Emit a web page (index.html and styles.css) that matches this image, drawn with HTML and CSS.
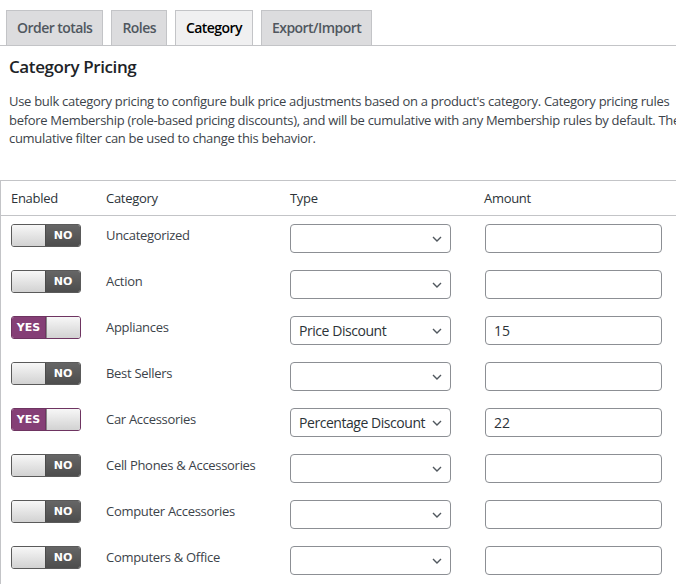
FILE: index.html
```html
<!DOCTYPE html>
<html lang="en">
<head>
<meta charset="utf-8">
<title>Category Pricing</title>
<link rel="stylesheet" href="styles.css">
</head>
<body>
<div class="page">
  <nav class="tabs">
    <a class="tab">Order totals</a>
    <a class="tab">Roles</a>
    <a class="tab tab-active">Category</a>
    <a class="tab">Export/Import</a>
  </nav>
  <section class="content">
    <h2 class="title">Category Pricing</h2>
    <p class="desc">Use bulk category pricing to configure bulk price adjustments based on a product's category. Category pricing rules<br>before Membership (role-based pricing discounts), and will be cumulative with any Membership rules by default. The<br>cumulative filter can be used to change this behavior.</p>
    <table class="pricing">
      <thead>
        <tr><th class="c-en">Enabled</th><th class="c-cat">Category</th><th class="c-type">Type</th><th class="c-amt">Amount</th></tr>
      </thead>
      <tbody>
        <tr>
          <td><span class="toggle off"><span class="knob"></span><span class="state">NO</span></span></td>
          <td class="label">Uncategorized</td>
          <td><div class="select"><span class="sel-text"></span><svg class="chev" width="10" height="6" viewBox="0 0 10 6"><path d="M1 1l4 4 4-4" fill="none" stroke="#50575e" stroke-width="1.4"/></svg></div></td>
          <td><div class="input"></div></td>
        </tr>
        <tr>
          <td><span class="toggle off"><span class="knob"></span><span class="state">NO</span></span></td>
          <td class="label">Action</td>
          <td><div class="select"><span class="sel-text"></span><svg class="chev" width="10" height="6" viewBox="0 0 10 6"><path d="M1 1l4 4 4-4" fill="none" stroke="#50575e" stroke-width="1.4"/></svg></div></td>
          <td><div class="input"></div></td>
        </tr>
        <tr>
          <td><span class="toggle on"><span class="state">YES</span><span class="knob"></span></span></td>
          <td class="label">Appliances</td>
          <td><div class="select"><span class="sel-text">Price Discount</span><svg class="chev" width="10" height="6" viewBox="0 0 10 6"><path d="M1 1l4 4 4-4" fill="none" stroke="#50575e" stroke-width="1.4"/></svg></div></td>
          <td><div class="input">15</div></td>
        </tr>
        <tr>
          <td><span class="toggle off"><span class="knob"></span><span class="state">NO</span></span></td>
          <td class="label">Best Sellers</td>
          <td><div class="select"><span class="sel-text"></span><svg class="chev" width="10" height="6" viewBox="0 0 10 6"><path d="M1 1l4 4 4-4" fill="none" stroke="#50575e" stroke-width="1.4"/></svg></div></td>
          <td><div class="input"></div></td>
        </tr>
        <tr>
          <td><span class="toggle on"><span class="state">YES</span><span class="knob"></span></span></td>
          <td class="label">Car Accessories</td>
          <td><div class="select"><span class="sel-text">Percentage Discount</span><svg class="chev" width="10" height="6" viewBox="0 0 10 6"><path d="M1 1l4 4 4-4" fill="none" stroke="#50575e" stroke-width="1.4"/></svg></div></td>
          <td><div class="input">22</div></td>
        </tr>
        <tr>
          <td><span class="toggle off"><span class="knob"></span><span class="state">NO</span></span></td>
          <td class="label">Cell Phones &amp; Accessories</td>
          <td><div class="select"><span class="sel-text"></span><svg class="chev" width="10" height="6" viewBox="0 0 10 6"><path d="M1 1l4 4 4-4" fill="none" stroke="#50575e" stroke-width="1.4"/></svg></div></td>
          <td><div class="input"></div></td>
        </tr>
        <tr>
          <td><span class="toggle off"><span class="knob"></span><span class="state">NO</span></span></td>
          <td class="label">Computer Accessories</td>
          <td><div class="select"><span class="sel-text"></span><svg class="chev" width="10" height="6" viewBox="0 0 10 6"><path d="M1 1l4 4 4-4" fill="none" stroke="#50575e" stroke-width="1.4"/></svg></div></td>
          <td><div class="input"></div></td>
        </tr>
        <tr>
          <td><span class="toggle off"><span class="knob"></span><span class="state">NO</span></span></td>
          <td class="label">Computers &amp; Office</td>
          <td><div class="select"><span class="sel-text"></span><svg class="chev" width="10" height="6" viewBox="0 0 10 6"><path d="M1 1l4 4 4-4" fill="none" stroke="#50575e" stroke-width="1.4"/></svg></div></td>
          <td><div class="input"></div></td>
        </tr>
      </tbody>
    </table>
  </section>
</div>
</body>
</html>
```

FILE: styles.css
```css
html, body {
  margin: 0;
  padding: 0;
  background: #fff;
  overflow: hidden;
}
body {
  font-family: "Open Sans", "Noto Sans", sans-serif;
  color: #3c434a;
  font-size: 13px;
}
.page {
  width: 760px;
  padding-top: 10px;
}
.tabs {
  display: flex;
  gap: 8px;
  padding-left: 6px;
  border-bottom: 1px solid #c3c4c7;
}
.tab {
  display: block;
  height: 34px;
  line-height: 34px;
  padding: 0 10px;
  border: 1px solid #c3c4c7;
  border-bottom: none;
  background: #dcdcde;
  color: #50575e;
  font-size: 14px;
  font-weight: 600;
  letter-spacing: -0.55px;
}
.tab-active {
  background: #f0f0f1;
  color: #000;
}
.content {
  padding-left: 0;
}
.title {
  margin: 0;
  padding: 11px 0 0 9px;
  font-size: 17px;
  font-weight: 600;
  color: #1d2327;
  line-height: 20px;
  letter-spacing: -0.4px;
}
.desc {
  margin: 15px 0 0 9px;
  line-height: 18.5px;
  white-space: nowrap;
  letter-spacing: -0.3px;
}
.pricing {
  margin-top: 32px;
  width: 760px;
  border-collapse: collapse;
  border-top: 1px solid #c3c4c7;
  border-left: 1px solid #c3c4c7;
}
.pricing th {
  text-align: left;
  font-weight: 400;
  color: #2c3338;
  height: 34px;
  padding: 0 0 0 10px;
  border-bottom: 1px solid #c3c4c7;
  letter-spacing: -0.3px;
}
.c-en { width: 85px; }
.c-cat { width: 174px; }
.c-type { width: 184px; }
.pricing td {
  padding: 8px 0 9px 10px;
  vertical-align: top;
}
.label {
  line-height: 20px;
  padding-top: 9px !important;
  letter-spacing: -0.3px;
}
.toggle {
  display: flex;
  width: 70px;
  height: 23px;
  border-radius: 3px;
  overflow: hidden;
  box-sizing: border-box;
  border: 1px solid #5a5a5a;
}
.toggle .knob {
  width: 33px;
  background: linear-gradient(to bottom, #f7f7f7, #d2d2d2);
}
.toggle .state {
  flex: 1;
  display: flex;
  align-items: center;
  justify-content: center;
  color: #fff;
  font-size: 11px;
  font-weight: 700;
  font-family: "DejaVu Sans", sans-serif;
}
.toggle.off .state {
  background: linear-gradient(to bottom, #666, #4d4d4d);
  border-left: 1px solid #4a4a4a;
}
.toggle.on {
  border-color: #6e3461;
}
.toggle.on .state {
  background: #853f76;
  border-right: 1px solid #6e3461;
}
.toggle.on .knob {
  border-left: 1px solid #888;
}
.select {
  display: flex;
  align-items: center;
  justify-content: space-between;
  box-sizing: border-box;
  width: 161px;
  height: 29px;
  border: 1px solid #8c8f94;
  border-radius: 4px;
  padding: 0 8px 0 8px;
  font-size: 14px;
  color: #2c3338;
  letter-spacing: -0.45px;
  white-space: nowrap;
  overflow: hidden;
}
.chev {
  flex: none;
  margin-top: 2px;
}
.input {
  box-sizing: border-box;
  width: 177px;
  height: 29px;
  border: 1px solid #8c8f94;
  border-radius: 4px;
  padding: 0 8px;
  line-height: 27px;
  font-size: 14px;
  color: #2c3338;
  margin-left: 1px;
}
```
